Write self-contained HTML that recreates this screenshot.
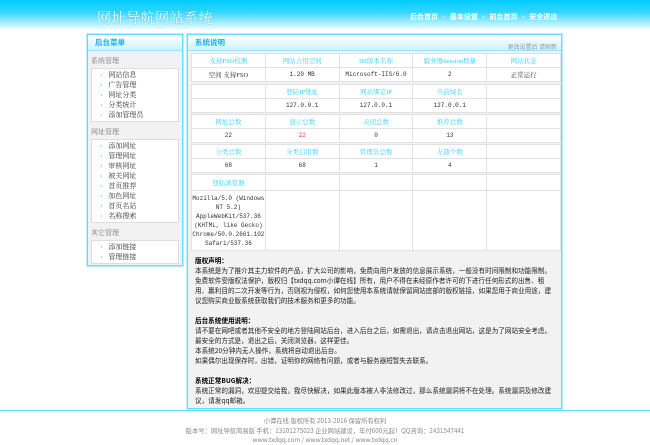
<!DOCTYPE html>
<html><head><meta charset="utf-8"><style>
*{margin:0;padding:0;box-sizing:border-box}
body{width:650px;height:444px;background:#fff;font-family:"Liberation Serif","Noto Serif CJK SC","Noto Sans CJK SC",serif;font-size:7px;color:#333;position:relative;overflow:hidden}
.hd{position:absolute;left:0;top:0;width:650px;height:30px;background:linear-gradient(#00ccff,#33d6ff 40%,#e6faff 95%,#fff)}
.logo{position:absolute;left:97px;top:8px;font-size:14px;color:#fff;letter-spacing:0.5px;text-shadow:0 0 1px #0aa}
.nav{position:absolute;left:410px;top:12px;font-size:7px;color:#fff;font-weight:bold;font-family:"Noto Sans CJK SC",sans-serif;word-spacing:3px}
.side{position:absolute;left:87px;top:34px;width:96px;height:232px;border:1px solid #66ddff;background:#f2f2f2;box-shadow:0 0 0 1px #b8efff}
.ttl{height:16px;background:linear-gradient(#fff,#ccf3ff);border-bottom:1px solid #99e6ff;color:#1ab2e6;font-weight:bold;font-size:7.5px;line-height:16px;padding-left:7px;font-family:"Noto Sans CJK SC",sans-serif}
.grp{color:#777;font-size:7px;padding-left:3px;height:13px;line-height:13px;margin-top:4px}
.box{margin:0 3px;background:#fff;border:1px solid #ddd;padding:1px 0}
.box div{height:10px;line-height:10px;padding-left:8px;color:#333}
.box div:before{content:"›";color:#33ccff;margin-right:6px}
.main{position:absolute;left:187px;top:34px;width:375px;height:375px;border:1px solid #66ddff;background:#f2f2f2;box-shadow:0 0 0 1px #b8efff}
.main .r{position:absolute;right:4px;top:4px;color:#999;font-weight:normal;font-size:6px}
table{position:absolute;left:3px;width:370px;border-collapse:collapse;background:#fff;table-layout:fixed}
td{border:1px solid #e2e2e2;text-align:center;height:14px;font-size:6.5px}
td.h{color:#33ccff}
td.m{font-family:"Liberation Mono",monospace;font-size:6px}
.txt{position:absolute;left:7px;top:220px;width:362px;line-height:10px;font-size:6.6px;color:#222;font-family:"Noto Sans CJK SC",sans-serif}
.txt b{color:#000}
.ft{position:absolute;left:0;top:410px;width:650px;border-top:1px solid #66ddff;text-align:center;color:#888;font-size:6.3px;line-height:9.5px;padding-top:5px;font-family:"Noto Sans CJK SC",sans-serif}
</style></head><body>
<div class="hd"><div class="logo">网址导航网站系统</div><div class="nav">后台首页 - 基本设置 - 前台首页 - 安全退出</div></div>
<div class="side"><div class="ttl">后台菜单</div>
<div class="grp">系统管理</div><div class="box"><div>网站信息</div><div>广告管理</div><div>网址分类</div><div>分类统计</div><div>添加管理员</div></div>
<div class="grp">网址管理</div><div class="box"><div>添加网址</div><div>管理网址</div><div>审核网址</div><div>被关网址</div><div>首页推荐</div><div>加色网址</div><div>首页名站</div><div>名称搜索</div></div>
<div class="grp">其它管理</div><div class="box"><div>添加链接</div><div>管理链接</div></div>
</div>
<div class="main"><div class="ttl">系统说明<span class="r">更改设置后 请刷新</span></div>
<table style="top:18px"><tr><td class="h">支持FSO检测</td><td class="h">网站占用空间</td><td class="h">IIS版本名称</td><td class="h">服务器Session数量</td><td class="h">网站状态</td></tr>
<tr><td>空间 支持FSO</td><td class="m">1.20 MB</td><td class="m">Microsoft-IIS/6.0</td><td class="m">2</td><td>正常运行</td></tr></table>
<table style="top:49px"><tr><td></td><td class="h">登陆IP地址</td><td class="h">网站绑定IP</td><td class="h">当前域名</td><td></td></tr>
<tr><td></td><td class="m">127.0.0.1</td><td class="m">127.0.0.1</td><td class="m">127.0.0.1</td><td></td></tr></table>
<table style="top:79px"><tr><td class="h">网址总数</td><td class="h">显示总数</td><td class="h">关闭总数</td><td class="h">推荐总数</td><td></td></tr>
<tr><td class="m">22</td><td class="m" style="color:#f33">22</td><td class="m">0</td><td class="m">13</td><td></td></tr></table>
<table style="top:109px"><tr><td class="h">分类总数</td><td class="h">分类启用数</td><td class="h">管理员总数</td><td class="h">友链个数</td><td></td></tr>
<tr><td class="m">68</td><td class="m">68</td><td class="m">1</td><td class="m">4</td><td></td></tr></table>
<table style="top:139px"><tr><td class="h" style="height:16px">登陆浏览器</td><td></td><td></td><td></td><td></td></tr>
<tr><td class="m" style="height:60px;line-height:9px">Mozilla/5.0 (Windows NT 5.2) AppleWebKit/537.36 (KHTML, like Gecko) Chrome/50.0.2661.102 Safari/537.36</td><td></td><td></td><td></td><td></td></tr></table>
<div class="txt"><b>版权声明：</b><br>本系统是为了推介其主力软件的产品，扩大公司的影响，免费向用户发放的信息展示系统，一般没有时间限制和功能限制。免费软件受版权法保护，版权归【txdqq.com小谭在线】所有，用户不得在未经原作者许可的下进行任何形式的出售、租用、赢利目的二次开发等行为，否则视为侵权，如何您使用本系统请就保留网站底部的版权链接，如果您用于商业用途，建议您购买商业版系统获取我们的技术服务和更多的功能。<br><br>
<b>后台系统使用说明：</b><br>请不要在网吧或者其他不安全的地方登陆网站后台，进入后台之后，如需退出，请点击退出网站，这是为了网站安全考虑。<br>最安全的方式是，退出之后，关闭浏览器，这样更佳。<br>本系统20分钟内无人操作，系统将自动退出后台。<br>如果偶尔出现保存时，出错，证明你的网络有问题，或者与服务器短暂失去联系。<br><br>
<b>系统正常BUG解决：</b><br>系统正常的漏洞，欢迎提交给我，我尽快解决，如果此版本被人非法修改过，那么系统漏洞将不在处理。系统漏洞及修改建议，请发qq邮箱。</div>
</div>
<div class="ft">小谭在线 版权所有 2013-2016 保留所有权利<br>版本号：网址导航简易版 手机：13101275023 企业网站建设，年付600元起！QQ咨询：2431547441<br>www.txdqq.com / www.txdqq.net / www.txdqq.cn</div>
</body></html>
